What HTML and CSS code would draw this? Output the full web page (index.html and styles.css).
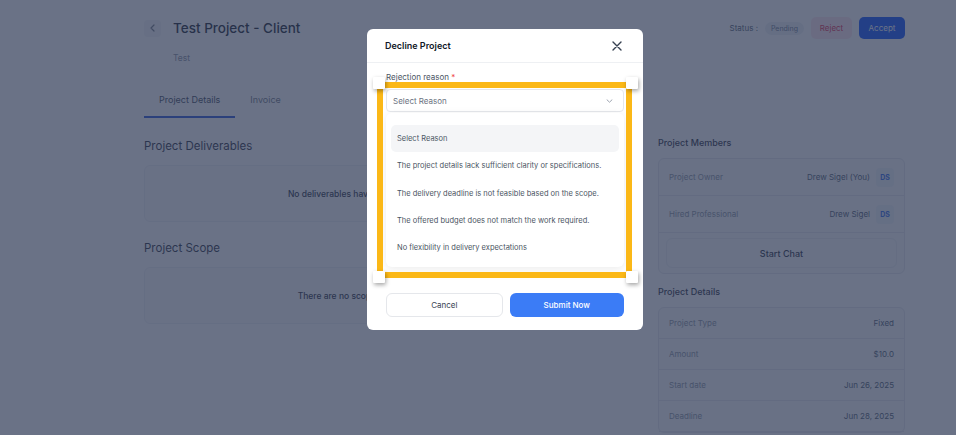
FILE: index.html
```html
<!DOCTYPE html>
<html lang="en">
<head>
    <meta charset="UTF-8">
    <meta name="viewport" content="width=device-width, initial-scale=1.0">
    <title>Test Project - Client</title>
    <link rel="stylesheet" href="styles.css">
</head>
<body>
    <div class="page">
        <header class="top-bar">
            <div class="title-wrap">
                <button class="back-btn">
                    <svg width="5" height="8" viewBox="0 0 5 8"><path d="M4 1 1 4l3 3" fill="none" stroke="#6b7280" stroke-width="1.2" stroke-linecap="round" stroke-linejoin="round"/></svg>
                </button>
                <h1>Test Project - Client</h1>
            </div>
            <div class="actions">
                <span class="status-label">Status :</span>
                <span class="pill">Pending</span>
                <button class="btn-reject">Reject</button>
                <button class="btn-accept">Accept</button>
            </div>
        </header>
        <p class="subtitle">Test</p>

        <nav class="tabs">
            <a class="tab active">Project Details</a>
            <a class="tab">Invoice</a>
        </nav>

        <div class="layout">
            <main class="main-col">
                <h2 class="section-title">Project Deliverables</h2>
                <div class="empty-card">No deliverables have been added to this project yet</div>
                <h2 class="section-title">Project Scope</h2>
                <div class="empty-card">There are no scope items added to this project</div>
            </main>

            <aside class="side-col">
                <h3 class="side-title">Project Members</h3>
                <div class="info-card">
                    <div class="info-row tall">
                        <span class="label">Project Owner</span>
                        <span class="value">Drew Sigel (You) <span class="avatar">DS</span></span>
                    </div>
                    <div class="info-row tall">
                        <span class="label">Hired Professional</span>
                        <span class="value">Drew Sigel <span class="avatar">DS</span></span>
                    </div>
                    <div class="chat-wrap">
                        <button class="chat-btn">Start Chat</button>
                    </div>
                </div>

                <h3 class="side-title">Project Details</h3>
                <div class="info-card">
                    <div class="info-row">
                        <span class="label">Project Type</span>
                        <span class="value">Fixed</span>
                    </div>
                    <div class="info-row">
                        <span class="label">Amount</span>
                        <span class="value">$10.0</span>
                    </div>
                    <div class="info-row">
                        <span class="label">Start date</span>
                        <span class="value">Jun 26, 2025</span>
                    </div>
                    <div class="info-row">
                        <span class="label">Deadline</span>
                        <span class="value">Jun 28, 2025</span>
                    </div>
                </div>
            </aside>
        </div>
    </div>

    <!-- Modal rechazo -->
    <div class="backdrop">
        <div class="modal">
            <div class="modal-header">
                <h4>Decline Project</h4>
                <svg class="close-icon" width="10" height="10" viewBox="0 0 10 10"><path d="M1 1l8 8M9 1 1 9" stroke="#374151" stroke-width="1.4" stroke-linecap="round"/></svg>
            </div>
            <div class="modal-body">
                <label class="field-label">Rejection reason <span class="req">*</span></label>
                <div class="select-box">
                    <span>Select Reason</span>
                    <svg width="7" height="4" viewBox="0 0 7 4"><path d="M1 .8l2.5 2.4L6 .8" fill="none" stroke="#9ca3af" stroke-width="1" stroke-linecap="round"/></svg>
                </div>
                <ul class="dropdown">
                    <li class="option selected">Select Reason</li>
                    <li class="option">The project details lack sufficient clarity or specifications.</li>
                    <li class="option">The delivery deadline is not feasible based on the scope.</li>
                    <li class="option">The offered budget does not match the work required.</li>
                    <li class="option">No flexibility in delivery expectations</li>
                </ul>
                <div class="modal-footer">
                    <button class="btn-cancel">Cancel</button>
                    <button class="btn-submit">Submit Now</button>
                </div>
            </div>

            <!-- Marco de anotación -->
            <div class="highlight">
                <span class="handle tl"></span>
                <span class="handle tr"></span>
                <span class="handle bl"></span>
                <span class="handle br"></span>
            </div>
        </div>
    </div>
</body>
</html>
```

FILE: styles.css
```css
html, body {
    margin: 0;
    height: 100%;
    overflow: hidden;
}

body {
    font-family: Inter, "Noto Sans", sans-serif;
    background: #ffffff;
    color: #1e293b;
}

button {
    font-family: inherit;
    border: none;
    cursor: pointer;
}

.page {
    padding: 17px 51px 0 144px;
}

/* Cabecera */
.top-bar {
    display: flex;
    justify-content: space-between;
    align-items: center;
    height: 22px;
}

.title-wrap {
    display: flex;
    align-items: center;
    gap: 12px;
}

.back-btn {
    width: 17px;
    height: 17px;
    border-radius: 4px;
    background: #f3f4f6;
    display: flex;
    align-items: center;
    justify-content: center;
    padding: 0;
}

h1 {
    margin: 0;
    font-size: 13.5px;
    font-weight: 500;
    line-height: 22px;
    color: #0f172a;
}

.actions {
    display: flex;
    align-items: center;
    gap: 7px;
}

.status-label {
    font-size: 8px;
    color: #475569;
}

.pill {
    height: 13px;
    line-height: 13px;
    padding: 0 6px;
    border-radius: 7px;
    background: #eef0f4;
    font-size: 7px;
    color: #64748b;
}

.btn-reject,
.btn-accept {
    height: 22px;
    border-radius: 5px;
    font-size: 8px;
}

.btn-reject {
    width: 41px;
    background: #fde7ee;
    color: #e11d48;
}

.btn-accept {
    width: 46px;
    background: #0048ff;
    color: #ffffff;
}

.subtitle {
    margin: 13px 0 0 29px;
    font-size: 8.5px;
    line-height: 12px;
    color: #868e9c;
}

/* Pestañas */
.tabs {
    display: flex;
    margin-top: 20px;
}

.tab {
    padding: 10px 15px;
    font-size: 9px;
    line-height: 12px;
    color: #6b7280;
    border-bottom: 2px solid transparent;
}

.tab.active {
    color: #334155;
    border-bottom-color: #1d4ed8;
}

/* Contenido */
.layout {
    display: grid;
    grid-template-columns: 496px 247px;
    gap: 18px;
    margin-top: 20px;
    align-items: start;
}

.section-title {
    margin: 0;
    font-size: 11.5px;
    font-weight: 400;
    line-height: 16px;
    color: #1e293b;
}

.empty-card {
    margin: 11px 0 18px;
    height: 55px;
    display: flex;
    align-items: center;
    justify-content: center;
    border: 1px solid #eef0f3;
    border-radius: 6px;
    background: #fbfbfc;
    font-size: 8.5px;
    font-weight: 500;
    color: #1e293b;
}

.side-title {
    margin: 0;
    font-size: 9px;
    font-weight: 500;
    line-height: 10px;
    color: #1e293b;
}

.info-card {
    margin: 10px 0 13px;
    border: 1px solid #e5e7eb;
    border-radius: 6px;
    background: #f9fafb;
}

.info-row {
    display: flex;
    justify-content: space-between;
    align-items: center;
    height: 30px;
    padding: 0 10px;
    border-bottom: 1px solid #e5e7eb;
    font-size: 8px;
}

.info-row.tall {
    height: 36px;
}

.label {
    color: #868e9c;
}

.value {
    display: flex;
    align-items: center;
    gap: 6px;
    color: #475569;
}

.avatar {
    width: 18px;
    height: 19px;
    border-radius: 4px;
    background: #eef2f7;
    display: flex;
    align-items: center;
    justify-content: center;
    font-size: 7px;
    font-weight: 700;
    color: #2563eb;
}

.chat-wrap {
    padding: 5px 7px;
}

.chat-btn {
    width: 100%;
    height: 30px;
    border: 1px solid #eceef1;
    border-radius: 6px;
    background: #f9fafb;
    font-size: 9px;
    font-weight: 500;
    color: #1e293b;
}

/* Fondo del modal */
.backdrop {
    position: fixed;
    inset: 0;
    background: rgba(49, 59, 87, 0.72);
}

.modal {
    position: relative;
    width: 276px;
    margin: 29px 0 0 367px;
    background: #ffffff;
    border-radius: 6px;
}

.modal-header {
    height: 34px;
    display: flex;
    justify-content: space-between;
    align-items: center;
    padding: 0 21px 0 18px;
    border-bottom: 1px solid #eef0f3;
    box-sizing: border-box;
}

.modal-header h4 {
    margin: 0;
    font-size: 9px;
    font-weight: 600;
    color: #111827;
}

.modal-body {
    padding: 8px 19px 13px;
}

.field-label {
    display: block;
    font-size: 8px;
    line-height: 12px;
    color: #4b5563;
}

.req {
    color: #ef4444;
}

.select-box {
    margin-top: 6px;
    height: 23px;
    box-sizing: border-box;
    border: 1px solid #e5e7eb;
    border-radius: 4px;
    padding: 0 10px 0 6px;
    display: flex;
    justify-content: space-between;
    align-items: center;
    font-size: 8px;
    color: #6b7280;
}

.dropdown {
    list-style: none;
    margin: 1px 0 0;
    padding: 12px 5px 6px;
    background: #ffffff;
    border-radius: 6px;
    box-shadow: 0 2px 10px rgba(0, 0, 0, 0.08);
}

.option {
    height: 27.3px;
    display: flex;
    align-items: center;
    padding: 0 6px;
    font-size: 7.5px;
    white-space: nowrap;
    color: #4b5563;
    border-radius: 5px;
}

.option.selected {
    background: #f4f5f7;
}

.modal-footer {
    display: flex;
    gap: 7px;
    margin-top: 26px;
}

.btn-cancel,
.btn-submit {
    flex: 1;
    height: 24px;
    border-radius: 6px;
    font-size: 8px;
}

.btn-cancel {
    background: #ffffff;
    border: 1px solid #e5e7eb;
    color: #374151;
}

.btn-submit {
    background: #3b7cf6;
    color: #ffffff;
    font-weight: 500;
}

/* Marco amarillo */
.highlight {
    position: absolute;
    left: 10px;
    top: 53px;
    width: 255px;
    height: 196px;
    box-sizing: border-box;
    border: 6px solid #fbb817;
}

.handle {
    position: absolute;
    width: 12px;
    height: 12px;
    background: #ffffff;
    border-radius: 1px;
    box-shadow: 1px 2px 4px rgba(0, 0, 0, 0.35);
}

.handle.tl { left: -10px; top: -11px; }
.handle.tr { right: -12px; top: -11px; }
.handle.bl { left: -10px; bottom: -11px; }
.handle.br { right: -12px; bottom: -11px; }
```
